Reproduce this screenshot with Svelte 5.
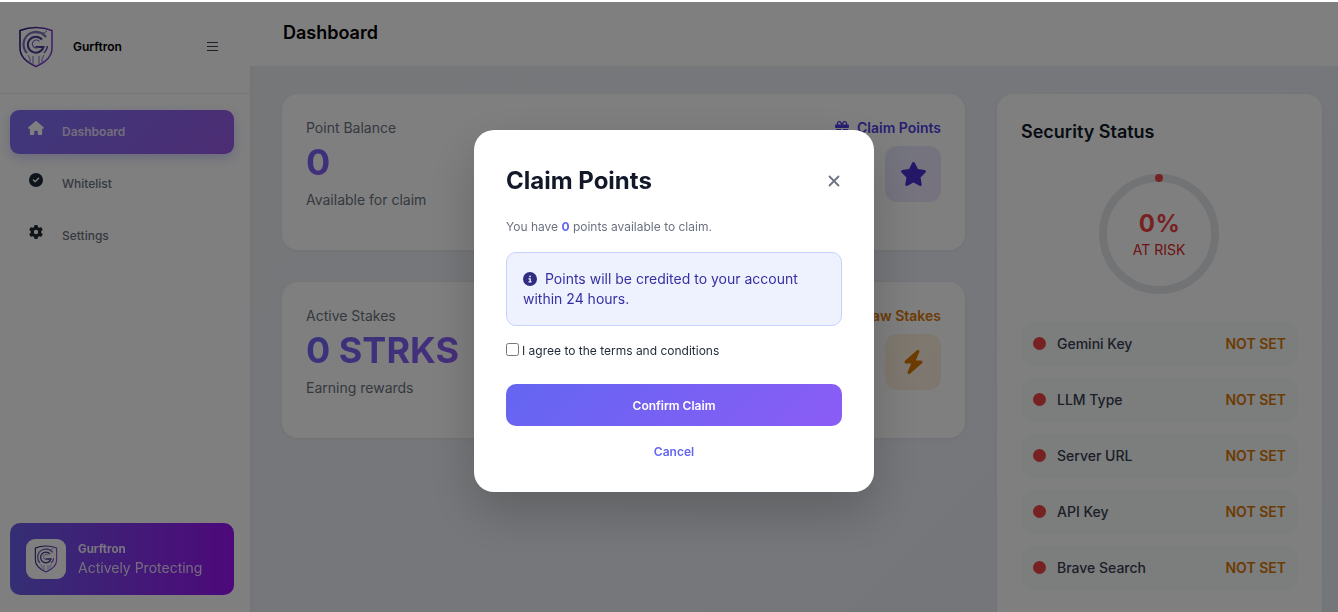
<script>
  const nav = [
    { label: 'Dashboard', icon: 'house', active: true },
    { label: 'Whitelist', icon: 'check' },
    { label: 'Settings', icon: 'gear' }
  ];
  const rows = ['Gemini Key', 'LLM Type', 'Server URL', 'API Key', 'Brave Search'];
  const paths = {
    house: 'M575.8 255.5c0 18-15 32.1-32 32.1h-32l.7 160.2c0 2.7-.2 5.4-.5 8.1V472c0 22.1-17.9 40-40 40H456c-1.1 0-2.2 0-3.3-.1c-1.4 .1-2.8 .1-4.2 .1H416 392c-22.1 0-40-17.9-40-40V448 384c0-17.7-14.3-32-32-32H256c-17.7 0-32 14.3-32 32v64 24c0 22.1-17.9 40-40 40H160 128.1c-1.5 0-3-.1-4.5-.2c-1.2 .1-2.4 .2-3.6 .2H104c-22.1 0-40-17.9-40-40V360c0-.9 0-1.9 .1-2.8V287.6H32c-18 0-32-14-32-32.1c0-9 3-17 10-24L266.4 8c7-7 15-8 22-8s15 2 21 7L564.8 231.5c8 7 12 15 11 24z',
    check: 'M256 512A256 256 0 1 0 256 0a256 256 0 1 0 0 512zM369 209L241 337c-9.4 9.4-24.6 9.4-33.9 0l-64-64c-9.4-9.4-9.4-24.6 0-33.9s24.6-9.4 33.9 0l47 47L335 175c9.4-9.4 24.6-9.4 33.9 0s9.4 24.6 0 33.9z',
    gear: 'M495.9 166.6c3.2 8.7 .5 18.4-6.4 24.6l-43.3 39.4c1.1 8.3 1.7 16.8 1.7 25.4s-.6 17.1-1.7 25.4l43.3 39.4c6.9 6.2 9.6 15.9 6.4 24.6c-4.4 11.9-9.7 23.3-15.8 34.3l-4.7 8.1c-6.6 11-14 21.4-22.1 31.2c-5.9 7.2-15.7 9.6-24.5 6.8l-55.7-17.7c-13.4 10.3-28.2 18.9-44 25.4l-12.5 57.1c-2 9.1-9 16.3-18.2 17.8c-13.8 2.3-28 3.5-42.5 3.5s-28.7-1.2-42.5-3.5c-9.2-1.5-16.2-8.7-18.2-17.8l-12.5-57.1c-15.8-6.5-30.6-15.1-44-25.4L83.1 425.9c-8.8 2.8-18.6 .3-24.5-6.8c-8.1-9.8-15.5-20.2-22.1-31.2l-4.7-8.1c-6.1-11-11.4-22.4-15.8-34.3c-3.2-8.7-.5-18.4 6.4-24.6l43.3-39.4C64.6 273.1 64 264.6 64 256s.6-17.1 1.7-25.4L22.4 191.2c-6.9-6.2-9.6-15.9-6.4-24.6c4.4-11.9 9.7-23.3 15.8-34.3l4.7-8.1c6.6-11 14-21.4 22.1-31.2c5.9-7.2 15.7-9.6 24.5-6.8l55.7 17.7c13.4-10.3 28.2-18.9 44-25.4l12.5-57.1c2-9.1 9-16.3 18.2-17.8C227.3 1.2 241.5 0 256 0s28.7 1.2 42.5 3.5c9.2 1.5 16.2 8.7 18.2 17.8l12.5 57.1c15.8 6.5 30.6 15.1 44 25.4l55.7-17.7c8.8-2.8 18.6-.3 24.5 6.8c8.1 9.8 15.5 20.2 22.1 31.2l4.7 8.1c6.1 11 11.4 22.4 15.8 34.3zM256 336a80 80 0 1 0 0-160 80 80 0 1 0 0 160z',
    star: 'M316.9 18C311.6 7 300.4 0 288.1 0s-23.4 7-28.8 18L195 150.3 51.4 171.5c-12 1.8-22 10.2-25.7 21.7s-.7 24.2 7.9 32.7L137.8 329 113.2 474.7c-2 12 3 24.2 12.9 31.3s23 8 33.8 2.3l128.3-68.5 128.3 68.5c10.8 5.7 23.9 4.9 33.8-2.3s14.9-19.3 12.9-31.3L438.5 329 542.7 225.9c8.6-8.5 11.7-21.2 7.9-32.7s-13.7-19.9-25.7-21.7L381.2 150.3 316.9 18z',
    bolt: 'M349.4 44.6c5.9-13.7 1.5-29.7-10.6-38.5s-28.6-8-39.9 1.8l-256 224c-10 8.8-13.6 22.9-8.9 35.3S50.7 288 64 288H175.5L98.6 467.4c-5.9 13.7-1.5 29.7 10.6 38.5s28.6 8 39.9-1.8l256-224c10-8.8 13.6-22.9 8.9-35.3s-16.6-20.7-30-20.7H272.5L349.4 44.6z',
    info: 'M256 512A256 256 0 1 0 256 0a256 256 0 1 0 0 512zM216 336h24V272H216c-13.3 0-24-10.7-24-24s10.7-24 24-24h48c13.3 0 24 10.7 24 24v88h8c13.3 0 24 10.7 24 24s-10.7 24-24 24H216c-13.3 0-24-10.7-24-24s10.7-24 24-24zm40-208a32 32 0 1 1 0 64 32 32 0 1 1 0-64z',
    gift: 'M190.5 68.8L225.3 128H224 152c-22.1 0-40-17.9-40-40s17.9-40 40-40h2.2c14.9 0 28.8 7.9 36.3 20.8zM64 88c0 14.4 3.5 28 9.6 40H32c-17.7 0-32 14.3-32 32v64c0 17.7 14.3 32 32 32H480c17.7 0 32-14.3 32-32V160c0-17.7-14.3-32-32-32H438.4c6.1-12 9.6-25.6 9.6-40c0-48.6-39.4-88-88-88h-2.2c-31.9 0-61.5 16.9-77.7 44.4L256 85.5l-24.1-41C215.7 16.9 186.1 0 154.2 0H152C103.4 0 64 39.4 64 88zm336 0c0 22.1-17.9 40-40 40H288h-1.3l34.8-59.2C329.1 55.9 342.9 48 357.8 48H360c22.1 0 40 17.9 40 40zM32 288V464c0 26.5 21.5 48 48 48H224V288H32zM288 512H432c26.5 0 48-21.5 48-48V288H288V512z'
  };
  const boxes = { house: '0 0 576 512', star: '0 0 576 512', bolt: '0 0 448 512' };
</script>

{#snippet icon(name, cls)}
  <svg class={cls} viewBox={boxes[name] ?? '0 0 512 512'} fill="currentColor" aria-hidden="true"><path d={paths[name]} /></svg>
{/snippet}

{#snippet logo(cls, id)}
  <svg class={cls} viewBox="0 0 36 42" fill="none" aria-hidden="true">
    <defs>
      <linearGradient id={id} x1="0" y1="0" x2="1" y2="0.4">
        <stop offset="0" stop-color="#1e1b6b" />
        <stop offset="1" stop-color="#8a45dc" />
      </linearGradient>
    </defs>
    <path d="M18 1.5C24 1.5 29 2.6 34 4.5V22C34 31 26 37 18 40.5C10 37 2 31 2 22V4.5C7 2.6 12 1.5 18 1.5Z" stroke={`url(#${id})`} stroke-width="1.6" />
    <path d="M28 11A12.5 12.5 0 0 0 5.5 18C5.5 22 7 25 9 27" stroke="#7b6fc0" stroke-width="2.2" />
    <path d="M24 13.5A8 8 0 1 0 25.5 21H17.5" stroke="#4a3d96" stroke-width="2" />
    <path d="M21.5 15.5A4 4 0 1 0 21 21" stroke="#7b6fc0" stroke-width="1.2" />
    <path d="M29.5 20A12 12 0 0 1 26 27" stroke="#5b4aa8" stroke-width="1.6" />
    <path d="M10 29L12 33V36M15 30V38M21 30V38M26 29L24 33V36" stroke="#8577c4" stroke-width="1" />
    <path d="M18 7H26L29 5" stroke="#8577c4" stroke-width="1" />
  </svg>
{/snippet}

<div class="page">
  <div class="shell">
    <aside class="sidebar">
      <div class="brand">
        {@render logo('brand-logo', 'lg1')}
        <span class="brand-name">Gurftron</span>
        <span class="burger"><i></i><i></i><i></i></span>
      </div>
      <nav class="nav">
        {#each nav as item}
          <div class="nav-item" class:active={item.active}>
            {@render icon(item.icon, 'nav-icon')}
            <span>{item.label}</span>
          </div>
        {/each}
      </nav>
      <div class="promo">
        <div class="promo-logo">{@render logo('promo-svg', 'lg2')}</div>
        <div class="promo-text">
          <strong>Gurftron</strong>
          <span>Actively Protecting</span>
        </div>
      </div>
    </aside>

    <div class="main">
      <header class="topbar"><h1>Dashboard</h1></header>
      <div class="content">
        <div class="col">
          <section class="card stat">
            <div>
              <p class="stat-label">Point Balance</p>
              <p class="stat-value">0</p>
              <p class="stat-note">Available for claim</p>
            </div>
            <div class="stat-side">
              <span class="stat-link indigo">{@render icon('gift', 'link-icon')}Claim Points</span>
              <span class="tile tile-indigo">{@render icon('star', 'tile-star')}</span>
            </div>
          </section>
          <section class="card stat">
            <div>
              <p class="stat-label">Active Stakes</p>
              <p class="stat-value">0 STRKS</p>
              <p class="stat-note">Earning rewards</p>
            </div>
            <div class="stat-side">
              <span class="stat-link amber">Withdraw Stakes</span>
              <span class="tile tile-amber">{@render icon('bolt', 'tile-bolt')}</span>
            </div>
          </section>
        </div>
        <section class="card security">
          <h2>Security Status</h2>
          <div class="ring">
            <i class="ring-dot"></i>
            <b>0%</b>
            <span>AT RISK</span>
          </div>
          <div class="rows">
            {#each rows as row}
              <div class="row">
                <i class="dot"></i>
                <span class="row-label">{row}</span>
                <span class="row-state">NOT SET</span>
              </div>
            {/each}
          </div>
        </section>
      </div>
    </div>

    <div class="overlay">
      <div class="modal">
        <div class="modal-head">
          <h3>Claim Points</h3>
          <svg class="close" viewBox="0 0 12 12" fill="none" aria-hidden="true"><path d="M1.5 1.5L10.5 10.5M10.5 1.5L1.5 10.5" stroke="currentColor" stroke-width="1.8" stroke-linecap="round" /></svg>
        </div>
        <p class="modal-text">You have <b>0</b> points available to claim.</p>
        <div class="notice">{@render icon('info', 'info-icon')}Points will be credited to your account within 24 hours.</div>
        <label class="agree"><input type="checkbox" /><span>I agree to the terms and conditions</span></label>
        <button class="confirm" type="button">Confirm Claim</button>
        <button class="cancel" type="button">Cancel</button>
      </div>
    </div>
  </div>
</div>

<style>
  :global(body) { margin: 0; background: #fff; overflow: hidden; }
  * { box-sizing: border-box; }
  p, h1, h2, h3 { margin: 0; }
  .page { height: 612px; padding-top: 2px; font-family: Inter, "Liberation Sans", sans-serif; }
  .shell { position: relative; display: flex; height: 610px; overflow: hidden; background: linear-gradient(135deg, #eef0f3, #e8edf5); }

  .sidebar { flex: none; width: 250px; background: #fff; display: flex; flex-direction: column; padding-bottom: 17px; box-shadow: 2px 0 8px rgba(0,0,0,.03); }
  .brand { height: 92px; flex: none; display: flex; align-items: center; padding: 0 32px 0 18px; border-bottom: 1px solid #edeff2; }
  .brand-logo { width: 36px; height: 42px; margin-top: -2px; }
  .brand-name { margin-left: 19px; margin-top: -2px; font-size: 12px; font-weight: 600; color: #000; flex: 1; }
  .burger { display: flex; flex-direction: column; gap: 2.5px; width: 11px; margin-top: -2px; }
  .burger i { height: 1.5px; background: #374151; }
  .nav { flex: 1; padding: 16px 16px 0 10px; display: flex; flex-direction: column; gap: 8px; }
  .nav-item { height: 44px; padding: 0 18px; display: flex; align-items: center; gap: 18px; border-radius: 9px; font-size: 12px; font-weight: 500; color: #6b7280; }
  .nav-item span { margin-top: -2px; }
  .nav-item.active { background: linear-gradient(135deg, #7d70f5, #9a5ae8); color: #e4ddf8; font-weight: 600; box-shadow: 0 4px 12px rgba(99,102,241,.3); }
  :global(.nav-icon) { width: 16px; height: 14px; margin-top: -9px; flex: none; color: #1f2937; }
  .nav-item.active :global(.nav-icon) { color: #fff; }
  .promo { margin: 0 16px 0 10px; height: 72px; flex: none; border-radius: 10px; background: linear-gradient(90deg, #6a5ee8, #9a12f5); padding: 0 16px; display: flex; align-items: center; gap: 12px; color: #fff; }
  .promo-logo { width: 40px; height: 40px; border-radius: 9px; background: #fff; display: flex; align-items: center; justify-content: center; }
  :global(.promo-svg) { width: 24px; height: 28px; }
  .promo-text { display: flex; flex-direction: column; gap: 3px; opacity: .9; }
  .promo-text strong { font-size: 11.5px; font-weight: 700; }
  .promo-text span { font-size: 14px; font-weight: 400; opacity: .9; }

  .main { flex: 1; min-width: 0; display: flex; flex-direction: column; }
  .topbar { height: 64px; flex: none; background: #fff; padding: 0 33px; display: flex; align-items: center; }
  .topbar h1 { font-size: 18px; font-weight: 600; color: #000; margin-top: -4px; }
  .content { padding: 28px 16px 0 32px; display: flex; gap: 32px; align-items: flex-start; }
  .col { width: 683px; display: flex; flex-direction: column; gap: 32px; }
  .card { background: #fff; border-radius: 16px; box-shadow: 0 1px 4px rgba(0,0,0,.05); }
  .stat { height: 156px; padding: 24px; display: flex; justify-content: space-between; }
  .stat-label { font-size: 14px; line-height: 20px; color: #6b7280; }
  .stat-value { width: fit-content; font-size: 36px; line-height: 48px; font-weight: 700; background: linear-gradient(135deg, #6d66f5, #8f5cf8); background-clip: text; -webkit-background-clip: text; color: transparent; }
  .stat-note { font-size: 14px; line-height: 20px; color: #6b7280; margin-top: 4px; }
  .stat-side { display: flex; flex-direction: column; align-items: flex-end; gap: 8px; }
  .stat-link { font-size: 14px; font-weight: 600; line-height: 20px; display: flex; align-items: center; gap: 8px; }
  .indigo { color: #4f3fe5; }
  .amber { color: #d97706; }
  :global(.link-icon) { width: 14px; height: 14px; }
  .tile { width: 56px; height: 56px; border-radius: 12px; display: flex; align-items: center; justify-content: center; }
  .tile-indigo { background: linear-gradient(135deg, rgba(99,102,241,.15), rgba(139,92,246,.15)); color: #4a2fd0; }
  .tile-amber { background: linear-gradient(135deg, rgba(245,158,11,.13), rgba(217,119,6,.13)); color: #d97706; }
  :global(.tile-star) { width: 27px; height: 24px; }
  :global(.tile-bolt) { width: 21px; height: 24px; }

  .security { width: 325px; height: 560px; flex: none; padding: 24px; }
  .security h2 { font-size: 18px; line-height: 28px; font-weight: 600; color: #111827; }
  .ring { position: relative; width: 120px; height: 120px; margin: 28px 0 28px 78px; border: 8px solid #e5e7eb; border-radius: 50%; display: flex; flex-direction: column; align-items: center; justify-content: center; }
  .ring b { font-size: 24px; line-height: 30px; font-weight: 700; color: #ef4444; letter-spacing: .5px; margin-left: 1px; }
  .ring span { font-size: 14px; line-height: 20px; color: #dc2626; margin-top: 1px; }
  .ring-dot { position: absolute; top: -8px; left: 48px; width: 8px; height: 8px; border-radius: 50%; background: #ef4444; }
  .rows { display: flex; flex-direction: column; gap: 12px; }
  .row { height: 44px; flex: none; padding: 0 12px 1px; display: flex; align-items: center; background: #f9fafb; border-radius: 12px; }
  .dot { width: 13px; height: 13px; border-radius: 50%; background: #ef4444; margin-right: 11px; }
  .row-label { flex: 1; font-size: 14px; font-weight: 500; color: #374151; }
  .row-state { font-size: 14px; font-weight: 600; color: #d97706; }

  .overlay { position: absolute; inset: 0; background: rgba(0,0,0,.5); backdrop-filter: blur(.5px); }
  .modal { position: absolute; left: 474px; top: 128px; width: 400px; height: 362px; padding: 32px; background: #fff; border-radius: 20px; box-shadow: 0 20px 50px rgba(0,0,0,.2); display: flex; flex-direction: column; }
  .modal-head { display: flex; flex: none; justify-content: space-between; align-items: center; height: 36px; }
  .modal-head h3 { font-size: 24px; font-weight: 700; color: #111827; }
  .close { width: 12px; height: 12px; margin-right: 2px; color: #6b7280; margin-top: 2px; }
  .modal-text { margin-top: 19px; font-size: 12px; line-height: 20px; color: #6b7280; }
  .modal-text b { color: #6366f1; font-weight: 700; }
  .notice { margin-top: 15px; height: 74px; flex: none; padding: 16px; background: #eef2ff; border: 1px solid #c7d2fe; border-radius: 10px; font-size: 14px; line-height: 20px; color: #3730a3; }
  :global(.info-icon) { width: 14px; height: 14px; margin-right: 8px; vertical-align: -2px; color: #312e81; }
  .agree { margin-top: 15px; display: flex; align-items: center; height: 18px; flex: none; font-size: 12px; color: #1f2937; }
  .agree input { width: 13px; height: 13px; margin: 0 3px 0 0; position: relative; top: -1px; }
  .confirm { margin-top: 25px; height: 42px; flex: none; border: 0; border-radius: 10px; background: linear-gradient(135deg, #6366f1, #8b5cf6); color: #fff; font: 600 12px Inter, "Liberation Sans", sans-serif; }
  .cancel { margin-top: 16px; height: 18px; flex: none; padding: 0; border: 0; background: none; color: #6366f1; font: 600 12px Inter, "Liberation Sans", sans-serif; }
</style>
